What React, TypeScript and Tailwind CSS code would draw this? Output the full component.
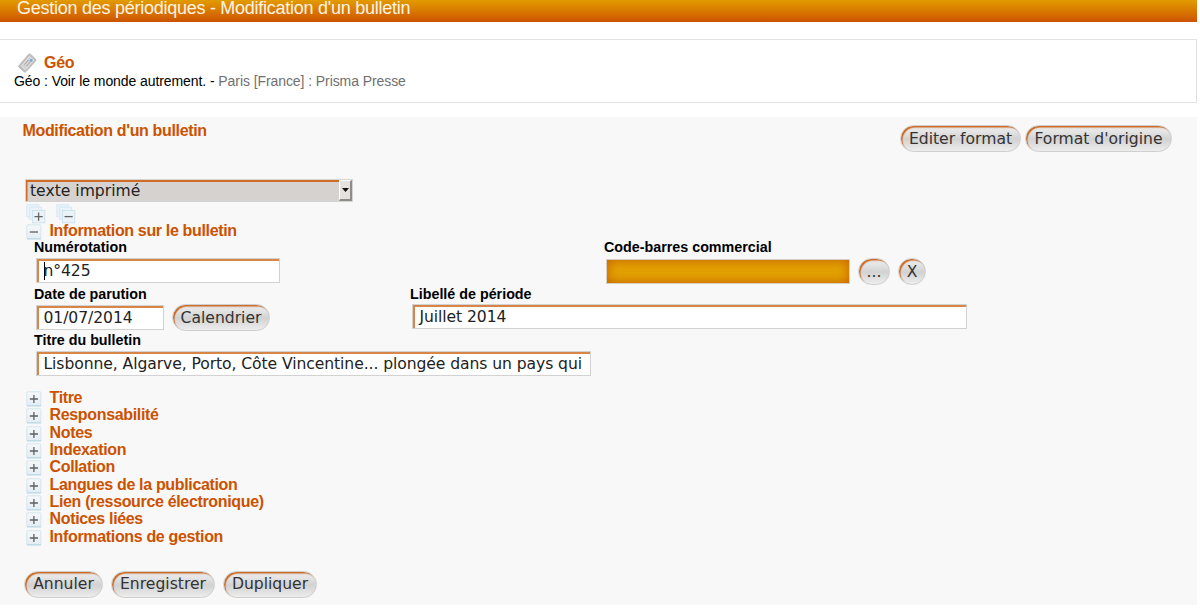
import type { ReactNode } from "react";

const SECTIONS = [
  "Titre",
  "Responsabilité",
  "Notes",
  "Indexation",
  "Collation",
  "Langues de la publication",
  "Lien (ressource électronique)",
  "Notices liées",
  "Informations de gestion",
];

function Toggle({ open = false }: { open?: boolean }) {
  return (
    <svg className="h-4 w-4 shrink-0" viewBox="0 0 16 16">
      <defs>
        <linearGradient id="toggleFill" x1="0" y1="0" x2="0" y2="1">
          <stop offset="0" stopColor="#f7f8f9" />
          <stop offset="1" stopColor="#e3edf3" />
        </linearGradient>
      </defs>
      <rect x="0.8" y="0.8" width="14" height="14" rx="0.5" fill="url(#toggleFill)" stroke="#d3e6f1" />
      <path d="M1 14.8H15" stroke="#bcd7e5" strokeWidth="1.2" />
      <path d={open ? "M3.8 8H12" : "M3.8 8H12M7.9 3.9V12.1"} stroke="#5e6163" strokeWidth="1.3" fill="none" />
    </svg>
  );
}

function StackToggle({ open = false }: { open?: boolean }) {
  return (
    <svg className="h-5 w-5 shrink-0" viewBox="0 0 20 20">
      <g fill="#e9f3f9" stroke="#d5e8f3" strokeWidth="0.9">
        <rect x="0.8" y="0.8" width="12" height="12" />
        <rect x="3.6" y="3.2" width="12" height="12" />
        <rect x="6.4" y="6.4" width="12.4" height="12.4" fill="#ecf3f7" stroke="#c9e0ed" />
      </g>
      <path d={open ? "M8.5 12.6H16.7" : "M8.5 12.6H16.7M12.6 8.5V16.7"} stroke="#606568" strokeWidth="1.3" fill="none" />
    </svg>
  );
}

function TicketIcon() {
  return (
    <svg className="h-5 w-5 shrink-0" viewBox="0 0 20 20">
      <path d="M1.2 12.3L10.5 1.4C11.2 0.7 12 0.8 12.7 1.4L17.6 6C18.2 6.7 18.1 7.5 17.5 8.1L8 18.6C7.3 19.3 6.4 19.2 5.8 18.5L1.1 14.4C0.5 13.7 0.6 13 1.2 12.3Z" fill="#bfbfbf" stroke="#b4b4b4" strokeWidth="0.8" />
      <path d="M3.4 13L11.4 3.4L15.8 7.3L7.3 16.8Z" fill="#d2d2d2" stroke="#e8e8e8" strokeWidth="0.9" />
      <path d="M6.4 11.6L10.6 6.8M8.4 13.2L12.2 9" stroke="#a2a2a2" strokeWidth="0.9" />
      <circle cx="13.2" cy="7.4" r="1.4" fill="#6fa9dc" />
    </svg>
  );
}

function PillButton({ children, className }: { children: ReactNode; className: string }) {
  return (
    <button
      className={`h-[27px] shrink-0 rounded-full border border-[#cfcfcf] bg-linear-to-b from-[#e6e6e6] from-20% via-[#d2d2d2] via-52% to-[#ededed] text-center font-['DejaVu_Sans',sans-serif] text-[15.6px] leading-[24px] whitespace-nowrap text-[#333] shadow-[inset_1.5px_1.5px_1px_#cc6922] ${className}`}
    >
      {children}
    </button>
  );
}

function Label({ children, className = "h-[18px]" }: { children: ReactNode; className?: string }) {
  return <div className={`text-[14.3px] leading-[15px] font-bold text-black ${className}`}>{children}</div>;
}

function Field({ label, value, width, labelClass, caret = false, children }: { label: string; value: string; width: string; labelClass?: string; caret?: boolean; children?: ReactNode }) {
  return (
    <div>
      <Label className={labelClass}>{label}</Label>
      <div className="ml-0.5 flex items-center">
        <div className={`flex h-[25px] items-center border border-[#d2d2d2] bg-white pt-px pl-[6.5px] font-['DejaVu_Sans',sans-serif] text-[15.6px] leading-[22px] tracking-[-0.08px] whitespace-nowrap text-[#222] shadow-[inset_2px_2px_0_#d88648] ${width}`}>
          {caret && <span className="-mr-px h-[18px] w-px bg-black" />}
          <span>{value}</span>
        </div>
        {children}
      </div>
    </div>
  );
}

export default function App() {
  return (
    <div className="h-[613px] w-[1200px] overflow-hidden bg-white font-['Liberation_Sans',sans-serif]">
      <div className="w-[1197px]">
        <header className="h-[22px] bg-linear-to-b from-[#e29b00] to-[#cc5200] pl-[17px]">
          <h1 className="text-[18px] leading-[16px] tracking-[-0.26px] whitespace-nowrap text-[#fff3e6]">Gestion des périodiques - Modification d'un bulletin</h1>
        </header>

        <section className="mt-[17px] h-16 border border-l-0 border-[#e2e2e2] pt-[13px] pl-3.5">
          <div className="flex h-5 items-center pl-1">
            <TicketIcon />
            <h2 className="ml-1.5 pb-px text-[16px] leading-none tracking-[-0.3px] font-bold text-[#cc5200]">Géo</h2>
          </div>
          <p className="text-[14px] leading-[16px] tracking-[-0.08px] text-[#707070]">
            <span className="text-black">Géo : Voir le monde autrement. - </span>Paris [France] : Prisma Presse
          </p>
        </section>

        <main className="mt-3.5 h-[488px] bg-[#f8f8f8]">
          <div className="flex h-[62px] items-start justify-between pt-2 pr-[25px] pl-[22.5px]">
            <h3 className="text-[16px] leading-[12px] tracking-[-0.34px] font-bold text-[#cc5200]">Modification d'un bulletin</h3>
            <div className="flex gap-1">
              <PillButton className="w-[121px]">Editer format</PillButton>
              <PillButton className="w-[147px]">Format d'origine</PillButton>
            </div>
          </div>

          <div className="ml-[25px] flex h-[23px] w-[328px] items-stretch border border-[#d4d4d4] bg-[#d6d2cf] shadow-[inset_1.5px_2px_0_#cf6c25]">
            <span className="flex-1 pl-1 font-['DejaVu_Sans',sans-serif] text-[15.6px] leading-[22px] text-[#222]">texte imprimé</span>
            <span className="flex w-[13px] items-center justify-center border-t border-r-2 border-b-2 border-l border-t-white border-r-[#8f8b87] border-b-[#8f8b87] border-l-white bg-[#e4e1de]">
              <svg className="h-1 w-[7px]" viewBox="0 0 7 4"><path d="M0 0H7L3.5 4Z" fill="#111" /></svg>
            </span>
          </div>

          <div className="flex h-[22px] gap-2.5 pt-0.5 pl-[26px]">
            <StackToggle />
            <StackToggle open />
          </div>
          <div className="flex h-4 items-start pl-[26px]">
            <Toggle open />
            <span className="ml-[7.5px] text-[16px] leading-[14px] tracking-[-0.34px] font-bold text-[#cc5200]">Information sur le bulletin</span>
          </div>

          <div className="flex h-[47px] pl-[34px]">
            <div className="w-[570px]">
              <Field label="Numérotation" value="n°425" width="w-[244px]" caret />
            </div>
            <div>
              <Label>Code-barres commercial</Label>
              <div className="ml-0.5 flex items-center">
                <div className="h-[25px] w-[244px] border border-[#d5cfc4] bg-[#e2a200] shadow-[inset_0_0_12px_#c65c00]" />
                <PillButton className="ml-2 w-[32px]">...</PillButton>
                <PillButton className="ml-2 w-[28px]">X</PillButton>
              </div>
            </div>
          </div>

          <div className="flex h-[46px] pl-[34px]">
            <div className="w-[376px]">
              <Field label="Date de parution" value="01/07/2014" width="w-[128px]" labelClass="h-[17px]">
                <PillButton className="ml-2 w-[98px]">Calendrier</PillButton>
              </Field>
            </div>
            <Field label="Libellé de période" value="Juillet 2014" width="w-[555px]" labelClass="h-[17px]" />
          </div>

          <div className="h-[57px] pl-[34px]">
            <Field label="Titre du bulletin" value="Lisbonne, Algarve, Porto, Côte Vincentine... plongée dans un pays qui" width="w-[555px]" />
          </div>

          <ul className="pl-[26px]">
            {SECTIONS.map((title) => (
              <li key={title} className="flex h-[17.33px] items-start">
                <span className="pt-px"><Toggle /></span>
                <span className="ml-[7.5px] text-[16px] leading-[16px] tracking-[-0.34px] font-bold text-[#cc5200]">{title}</span>
              </li>
            ))}
          </ul>

          <div className="mt-[25px] flex gap-2 pl-6">
            <PillButton className="w-[79px]">Annuler</PillButton>
            <PillButton className="w-[104px]">Enregistrer</PillButton>
            <PillButton className="w-[94px]">Dupliquer</PillButton>
          </div>
        </main>
      </div>
    </div>
  );
}
